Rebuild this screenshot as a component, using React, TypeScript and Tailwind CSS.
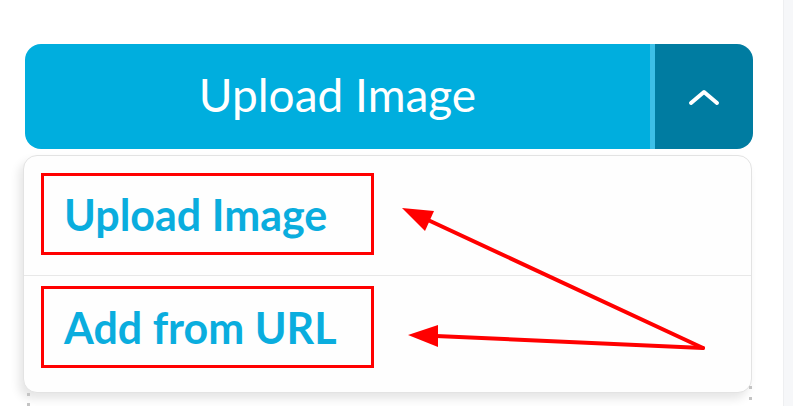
import React from 'react';

// Split "Upload Image" button with its open menu, annotated with red boxes and arrows
const menuItems = [
  { id: 'upload', label: 'Upload Image' },
  { id: 'url', label: 'Add from URL' },
];

const Annotations = () => (
  <svg
    className="pointer-events-none absolute left-0 top-0"
    width="793"
    height="406"
    viewBox="0 0 793 406"
  >
    <g stroke="#ff0000" strokeWidth="4" strokeLinecap="round" fill="none">
      <line x1="703" y1="348" x2="428" y2="220" />
      <line x1="703" y1="348" x2="436" y2="336" />
    </g>
    <g fill="#ff0000">
      <polygon points="402,208 434,211 425,231" />
      <polygon points="408,335 438,325 438,347" />
    </g>
  </svg>
);

const App = () => {
  return (
    <div
      className="relative flex h-[406px] w-[793px] overflow-hidden bg-white"
      style={{ fontFamily: 'Lato, "Open Sans", sans-serif' }}
    >
      <div className="relative flex-1 pl-[23px] pt-[44px]">
        {/* Split button */}
        <div className="ml-[2px] flex h-[105px] w-[728px] overflow-hidden rounded-[16px]">
          <button className="flex flex-1 items-center justify-center bg-[#00aede] pb-[4px] text-[46px] font-normal leading-none text-white">
            Upload Image
          </button>
          <div className="w-[5px] bg-[#3cc0e8]" />
          <button className="flex w-[98px] items-center justify-center bg-[#007ca1]">
            <svg width="32" height="18" viewBox="0 0 32 18" fill="none">
              <polyline
                points="3,15 16,4 29,15"
                stroke="white"
                strokeWidth="4"
                strokeLinecap="round"
                strokeLinejoin="round"
              />
            </svg>
          </button>
        </div>

        {/* Dropdown menu */}
        <div className="relative mt-[6px] w-[729px]">
          <div className="flex h-[238px] flex-col rounded-[14px] border border-[#e3e3e3] bg-[#fefefe] shadow-[-4px_6px_10px_rgba(0,0,0,0.10)]">
            {menuItems.map((item, i) => (
              <div
                key={item.id}
                className={
                  i === 0
                    ? 'flex h-[120px] items-start border-b border-[#e8e8e8] pl-[17px] pt-[17px]'
                    : 'flex flex-1 items-start pl-[17px] pt-[10px]'
                }
              >
                <div className="flex h-[82px] w-[333px] items-center border-[3px] border-[#ff0000] pl-[20px]">
                  <span className="text-[43px] font-bold leading-none text-[#0aadde]">
                    {item.label}
                  </span>
                </div>
              </div>
            ))}
          </div>
          {/* little handle dots under the menu */}
          <span className="absolute left-[4px] top-[238px] h-[3px] w-[3px] bg-[#c4c4c4]" />
          <span className="absolute left-[4px] top-[248px] h-[3px] w-[3px] bg-[#c4c4c4]" />
          <span className="absolute left-[726px] top-[231px] h-[3px] w-[3px] bg-[#c4c4c4]" />
          <span className="absolute left-[726px] top-[242px] h-[3px] w-[3px] bg-[#c4c4c4]" />
        </div>
      </div>

      {/* right edge strip */}
      <div className="w-[10px] border-l border-[#eeeff1] bg-[#f6f7f9]" />

      <Annotations />
    </div>
  );
};

export default App;
